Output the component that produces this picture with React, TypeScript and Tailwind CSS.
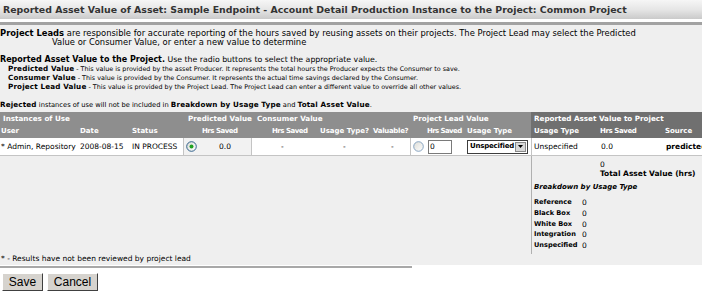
import React from "react";

function Radio({ checked }: { checked?: boolean }) {
  return (
    <svg width="11" height="11" viewBox="0 0 11 11" className="shrink-0">
      <defs>
        <linearGradient id={checked ? "rg1" : "rg2"} x1="0" y1="0" x2="1" y2="1">
          <stop offset="0" stopColor="#dcdcd6" />
          <stop offset="1" stopColor="#ffffff" />
        </linearGradient>
      </defs>
      <circle cx="5.5" cy="5.5" r="4.8" fill={`url(#${checked ? "rg1" : "rg2"})`} stroke={checked ? "#1c5180" : "#7c9cbc"} strokeWidth="0.9" />
      {checked && <circle cx="5.5" cy="5.5" r="2" fill="#21a121" />}
    </svg>
  );
}

function Select() {
  return (
    <div className="w-[61px] h-[14px] bg-white border border-[#3d3d3d] flex items-center justify-between">
      <span className="font-bold pl-[2px] text-[7px] tracking-[-0.2px]">Unspecified</span>
      <span className="w-[11px] h-[10px] mr-[1px] bg-[#d8d8d8] border border-[#8a8a8a] flex items-center justify-center">
        <svg width="5" height="3" viewBox="0 0 5 3"><path d="M0 0h5L2.5 3z" fill="#000" /></svg>
      </span>
    </div>
  );
}

function B({ children }: { children: React.ReactNode }) {
  return <b className="text-[7.2px] leading-[9px] tracking-[0.15px]">{children}</b>;
}

export default function App() {
  return (
    <div className="w-[702px] h-[296px] overflow-hidden bg-white text-black font-['DejaVu_Sans',Verdana,sans-serif] text-[7.5px] leading-[9px]">
      <div className="h-[19px] bg-linear-to-b from-[#f6f6f6] via-[#e6e6e6] to-[#cacaca] flex items-center pl-[3px] text-[9.4px] font-bold text-[#333] whitespace-nowrap">
        Reported Asset Value of Asset: Sample Endpoint - Account Detail Production Instance to the Project: Common Project
      </div>
      <div className="h-[3px] bg-white" />
      <div className="h-[3px] bg-[#a2a2a2]" />
      <div className="bg-[#efefef] pt-[4px] h-[240px] flex flex-col">
        <div className="whitespace-nowrap leading-[9px]">
          <div className="h-[9px] text-[8.4px]"><b>Project Leads</b> are responsible for accurate reporting of the hours saved by reusing assets on their projects. The Project Lead may select the Predicted</div>
          <div className="h-[9px] text-[8.4px] pl-[52px]">Value or Consumer Value, or enter a new value to determine</div>
          <div className="h-[9px] text-[7.8px] mt-[8px]"><b className="text-[8px]">Reported Asset Value to the Project.</b> Use the radio buttons to select the appropriate value.</div>
          <div className="pl-[8px] text-[6.4px]">
            <div className="h-[9px]"><B>Predicted Value</B> - This value is provided by the asset Producer. It represents the total hours the Producer expects the Consumer to save.</div>
            <div className="h-[9px]"><B>Consumer Value</B> - This value is provided by the Consumer. It represents the actual time savings declared by the Consumer.</div>
            <div className="h-[9px]"><B>Project Lead Value</B> - This value is provided by the Project Lead. The Project Lead can enter a different value to override all other values.</div>
          </div>
          <div className="h-[9px] mt-[9px] text-[6.7px]"><B>Rejected</B> instances of use will not be included in <B>Breakdown by Usage Type</B> and <B>Total Asset Value</B>.</div>
        </div>

        <div className="mt-[3px] whitespace-nowrap">
          {/* header row 1 */}
          <div className="flex h-[13px] items-center font-bold text-white text-[7.2px]">
            <div className="w-[531px] h-full bg-[#8e8e8e] flex items-center">
              <div className="w-[183px] pl-[3px]">Instances of Use</div>
              <div className="w-[69px] pl-[5px]">Predicted Value</div>
              <div className="w-[158px] pl-[5px]">Consumer Value</div>
              <div className="w-[121px] pl-[3px]">Project Lead Value</div>
            </div>
            <div className="flex-1 h-full bg-[#707070] flex items-center pl-[3px]">Reported Asset Value to Project</div>
          </div>
          {/* header row 2 */}
          <div className="flex h-[13px] items-center font-bold text-white text-[7px]">
            <div className="w-[531px] h-full bg-[#8e8e8e] flex items-center">
              <div className="w-[78px] pl-[1px]">User</div>
              <div className="w-[52px] pl-[2px]">Date</div>
              <div className="w-[53px] pl-[2px]">Status</div>
              <div className="w-[69px] pl-[19px] tracking-[-0.5px]">Hrs Saved</div>
              <div className="w-[58px] pl-[20px] tracking-[-0.5px]">Hrs Saved</div>
              <div className="w-[60px] pl-[10px]">Usage Type?</div>
              <div className="w-[40px] pl-[3px] tracking-[-0.3px]">Valuable?</div>
              <div className="w-[55px] pl-[17px] tracking-[-0.6px]">Hrs Saved</div>
              <div className="w-[66px] pl-[2px]">Usage Type</div>
            </div>
            <div className="flex-1 h-full bg-[#707070] flex items-center">
              <div className="w-[67px] pl-[3px]">Usage Type</div>
              <div className="w-[65px] pl-[2px] tracking-[-0.4px]">Hrs Saved</div>
              <div className="flex-1 pl-[2px]">Source</div>
            </div>
          </div>
          {/* data row */}
          <div className="flex h-[18px] items-stretch">
            <div className="w-[531px] flex bg-white border-b border-[#c4c4c4]">
              <div className="w-[78px] pl-[1px] flex items-center">* Admin, Repository</div>
              <div className="w-[52px] pl-[2px] flex items-center">2008-08-15</div>
              <div className="w-[53px] pl-[2px] flex items-center">IN PROCESS</div>
              <div className="w-[69px] flex items-center bg-[#f2f2f2] border-x border-[#c4c4c4] pl-[2px]">
                <Radio checked />
                <span className="ml-[22px]">0.0</span>
              </div>
              <div className="w-[58px] flex items-center pl-[29px]">-</div>
              <div className="w-[60px] flex items-center pl-[33px]">-</div>
              <div className="w-[40px] flex items-center pl-[21px]">-</div>
              <div className="w-[121px] flex items-center border-l border-[#c4c4c4] pl-[2px]">
                <Radio />
                <div className="ml-[4px] w-[24px] h-[14px] bg-white border border-[#7a7a7a] flex items-center pl-[1px]">0</div>
                <div className="ml-[15px]"><Select /></div>
              </div>
            </div>
            <div className="flex-1 flex bg-white border-l border-b border-[#c4c4c4]">
              <div className="w-[67px] pl-[2px] flex items-center">Unspecified</div>
              <div className="w-[65px] pl-[2px] flex items-center">0.0</div>
              <div className="flex-1 pl-[2px] flex items-center font-bold">predicted</div>
            </div>
          </div>
          {/* lower area */}
          <div className="flex">
            <div className="w-[531px]" />
            <div className="flex-1 border-l border-[#b0b0b0] h-[98px] pt-[4px]">
              <div className="pl-[68px]">0</div>
              <div className="pl-[68px] font-bold">Total Asset Value (hrs)</div>
              <div className="pl-[2px] mt-[5px] font-bold italic text-[7px]">Breakdown by Usage Type</div>
              <div className="mt-[6px] pl-[2px] flex flex-col gap-[1.75px]">
                {["Reference", "Black Box", "White Box", "Integration", "Unspecified"].map((l) => (
                  <div key={l} className="flex">
                    <span className="w-[48px] font-bold text-[6.6px]">{l}</span>
                    <span>0</span>
                  </div>
                ))}
              </div>
            </div>
          </div>
        </div>
        <div className="mt-auto mb-[3px] pl-[1px] whitespace-nowrap">* - Results have not been reviewed by project lead</div>
      </div>
      <div className="w-[412px] h-[2px] bg-[#a8a8a8] mt-[1px]" />
      <div className="flex gap-[4px] pl-[2px] pt-[5px] font-['Liberation_Sans',Arial,sans-serif] text-[12px]">
        <button className="w-[41px] h-[18px] bg-[#d6d3ce] border border-t-white border-l-white border-r-[#404040] border-b-[#404040] flex items-center justify-center leading-none">Save</button>
        <button className="w-[51px] h-[18px] bg-[#d6d3ce] border border-t-white border-l-white border-r-[#404040] border-b-[#404040] flex items-center justify-center leading-none">Cancel</button>
      </div>
    </div>
  );
}
